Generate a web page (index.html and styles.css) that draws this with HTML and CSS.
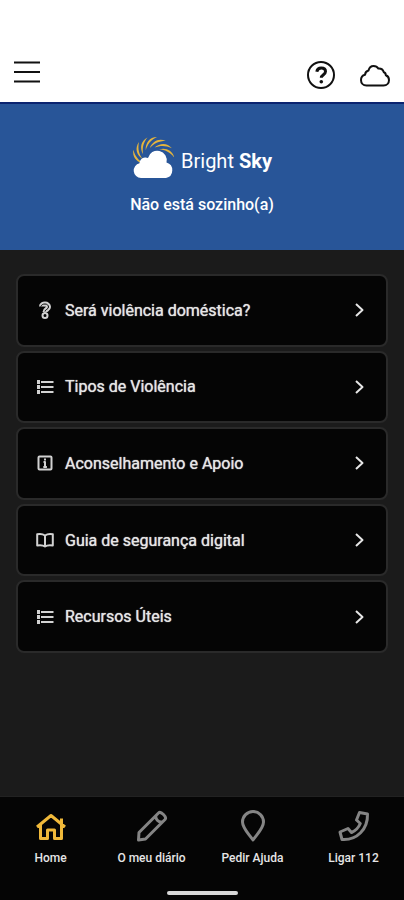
FILE: index.html
```html
<!DOCTYPE html>
<html lang="pt">
<head>
  <meta charset="UTF-8">
  <meta name="viewport" content="width=device-width, initial-scale=1.0">
  <title>Bright Sky</title>
  <link rel="stylesheet" href="styles.css">
</head>
<body>

  <header class="topbar">
    <button type="button" class="icon-btn menu-btn" aria-label="Menu">
      <svg width="26" height="24" viewBox="0 0 26 24"><path d="M0 2.500h26M0 12h26M0 21.500h26"/></svg>
    </button>
    <div class="topbar-actions">
      <button type="button" class="icon-btn" aria-label="Ajuda">
        <svg width="30" height="30" viewBox="0 0 30 30">
          <circle cx="15" cy="15" r="13"/>
          <path class="mark" d="M10.800 11.800c.4-2.600 2.200-3.800 4.400-3.800 2.500 0 4.300 1.400 4.300 3.600 0 3.200-4.200 3-4.200 6.200"/>
          <circle class="dot" cx="15.300" cy="21.800" r="1.800"/>
        </svg>
      </button>
      <button type="button" class="icon-btn" aria-label="Nuvem">
        <svg class="cloud" width="30" height="30" viewBox="0 0 30 30"><path d="M6.500 25.500C3 25.500 1 23 1 20c0-2.700 1.600-4.600 4-5.200C5.200 12.500 6.600 11 8.500 10.500 9.300 7.500 11 6 13.500 6c2 0 3.800.8 4.800 2.600 2.500-.2 4.700 1 5.500 3.600 1.500.4 2 1.600 2 3 2 .7 3.200 2.600 3.200 4.800 0 3-2 5.500-5.500 5.500z"/></svg>
      </button>
    </div>
  </header>

  <section class="hero">
    <div class="brand">
      <svg width="42" height="42" viewBox="0 0 42 42">
        <g class="rays">
          <path d="M10.500 22C4.500 18 2.500 11 7 5C5.500 12 7 17 10.500 22z" transform="rotate(-26 21 21)"/>
          <path d="M10.500 22C4.500 18 2.500 11 7 5C5.500 12 7 17 10.500 22z"/>
          <path d="M10.500 22C4.500 18 2.500 11 7 5C5.500 12 7 17 10.500 22z" transform="rotate(26 21 21)"/>
          <path d="M10.500 22C4.500 18 2.500 11 7 5C5.500 12 7 17 10.500 22z" transform="rotate(52 21 21)"/>
          <path d="M10.500 22C4.500 18 2.500 11 7 5C5.500 12 7 17 10.500 22z" transform="rotate(78 21 21)"/>
          <path d="M10.500 22C4.500 18 2.500 11 7 5C5.500 12 7 17 10.500 22z" transform="rotate(104 21 21)"/>
          <path d="M10.500 22C4.500 18 2.500 11 7 5C5.500 12 7 17 10.500 22z" transform="rotate(130 21 21)"/>
        </g>
        <path class="puff" d="M9 41a7.500 7.500 0 0 1-1.500-14.800A6 6 0 0 1 16 21a9.500 9.500 0 0 1 18.500 4.500A8 8 0 0 1 34 41z"/>
      </svg>
      <h1>Bright <strong>Sky</strong></h1>
    </div>
    <p>Não está sozinho(a)</p>
  </section>

  <main>
    <ul class="menu">
      <li>
        <a href="#violencia">
          <svg class="lead question" width="18" height="18" viewBox="0 0 18 18">
            <path class="outer" d="M5.500 5.500C5.500 3.700 7 3 9 3s3.500 1.200 3.500 3c0 2.500-3.500 2.300-3.500 5"/>
            <circle class="outer" cx="9" cy="14.500" r="1"/>
            <path class="inner" d="M4.800 5.500C5.500 3.700 7 3 9 3s3.500 1.200 3.500 3c0 2.500-3.500 2.300-3.500 4.500"/>
            <circle class="inner" cx="9" cy="14.300" r=".3"/>
          </svg>
          <span>Será violência doméstica?</span>
          <svg class="chevron" width="10" height="16" viewBox="0 0 10 16"><path d="M1 2l6.500 6L1 14"/></svg>
        </a>
      </li>
      <li>
        <a href="#tipos">
          <svg class="lead" width="18" height="18" viewBox="0 0 18 18"><path class="bullets" d="M1 4h3M1 9h3M1 14h3"/><path d="M5 4h12.500M5 9h12.500M5 14h12.500"/></svg>
          <span>Tipos de Violência</span>
          <svg class="chevron" width="10" height="16" viewBox="0 0 10 16"><path d="M1 2l6.500 6L1 14"/></svg>
        </a>
      </li>
      <li>
        <a href="#apoio">
          <svg class="lead" width="18" height="18" viewBox="0 0 18 18"><rect x="2.500" y="2.500" width="13" height="13" rx="1"/><path d="M9 4.500v2M7.500 8H9v5M7.300 13h3.600"/></svg>
          <span>Aconselhamento e Apoio</span>
          <svg class="chevron" width="10" height="16" viewBox="0 0 10 16"><path d="M1 2l6.500 6L1 14"/></svg>
        </a>
      </li>
      <li>
        <a href="#guia">
          <svg class="lead" width="18" height="18" viewBox="0 0 18 18"><path d="M9 4.500C7 3 4 2.600 1.200 3.200v11.200C4 14 7 14 9 15.500c2-1.500 5-1.500 7.800-1.100V3.200C14 2.600 11 3 9 4.500zV15"/></svg>
          <span>Guia de segurança digital</span>
          <svg class="chevron" width="10" height="16" viewBox="0 0 10 16"><path d="M1 2l6.500 6L1 14"/></svg>
        </a>
      </li>
      <li>
        <a href="#recursos">
          <svg class="lead" width="18" height="18" viewBox="0 0 18 18"><path class="bullets" d="M1 4h3M1 9h3M1 14h3"/><path d="M5 4h12.500M5 9h12.500M5 14h12.500"/></svg>
          <span>Recursos Úteis</span>
          <svg class="chevron" width="10" height="16" viewBox="0 0 10 16"><path d="M1 2l6.500 6L1 14"/></svg>
        </a>
      </li>
    </ul>
  </main>

  <footer>
    <nav class="tabs">
      <a href="#home" class="active">
        <svg width="32" height="32" viewBox="0 0 32 32"><path d="M2 17L16 5.500 30 17M5.500 15v13.500h7V20h7v8.500h7V15M26.500 14V8.500"/></svg>
        Home
      </a>
      <a href="#diario">
        <svg width="32" height="32" viewBox="0 0 32 32"><path d="M2.500 30l.5-7.500L22.500 3c2.300-2.300 8.800 4 6.500 6.500L9.500 29zM20 5.500c-1 3.500 2.500 7 6 6.500"/></svg>
        O meu diário
      </a>
      <a href="#ajuda">
        <svg width="32" height="32" viewBox="0 0 32 32"><path d="M16 30C11 23 5.500 18 5.500 12a10.500 10.500 0 0 1 21 0c0 6-5.500 11-10.500 18z"/></svg>
        Pedir Ajuda
      </a>
      <a href="tel:112">
        <svg width="32" height="32" viewBox="0 0 32 32"><path d="M21.500 2.500l8 1.500C30 19 19 30.500 4 29.500L2 22l8-3.500 3.500 4c4-1.700 7-4.800 8.800-9L18.500 10z"/></svg>
        Ligar 112
      </a>
    </nav>
    <div class="home-indicator"></div>
  </footer>

</body>
</html>
```
FILE: styles.css
```css
* {
  box-sizing: border-box;
}
body {
  margin: 0;
  font-family: Roboto, Arial, sans-serif;
  background: #1b1b1b;
  color: #e6e6e6;
  display: flex;
  flex-direction: column;
  min-height: 100vh;
}

svg {
  display: block;
  flex-shrink: 0;
  fill: none;
  stroke: currentColor;
  stroke-width: 2;
  stroke-linejoin: round;
}

a {
  color: inherit;
  text-decoration: none;
}

/* top bar */
.topbar {
  background: #fff;
  color: #111;
  border-bottom: 2px solid #0b2470;
  padding: 60px 14px 12px;
  display: flex;
  justify-content: space-between;
  align-items: flex-start;
}
.topbar-actions {
  display: flex;
  gap: 24px;
}
.icon-btn {
  background: none;
  border: none;
  padding: 0;
  color: inherit;
  cursor: pointer;
}
.icon-btn .mark {
  stroke-width: 3;
}
.icon-btn .dot {
  fill: currentColor;
  stroke: none;
}

/* hero */
.hero {
  background: #285598;
  color: #fff;
  height: 146px;
  padding-top: 33px;
  text-align: center;
}
.brand {
  display: flex;
  justify-content: center;
  align-items: center;
  gap: 7px;
}
.brand h1 {
  margin: 6px 0 0;
  font-size: 20px;
  font-weight: 400;
  line-height: 24px;
}
.brand strong {
  font-weight: 700;
}
.rays {
  fill: #e6b53c;
  stroke: none;
}
.puff {
  fill: #fff;
  stroke: none;
}
.hero p {
  margin: 16px 0 0;
  font-size: 16px;
  font-weight: 500;
  line-height: 20px;
}

/* menu */
main {
  flex-grow: 1;
  padding: 24px 16px;
}
.menu {
  list-style: none;
  margin: 0;
  padding: 0;
  display: grid;
  grid-auto-rows: 1fr;
  gap: 4px;
  min-height: 379px;
}
.menu a {
  height: 100%;
  padding: 0 21px 0 18px;
  background: #050505;
  border: 2px solid #2a2a2a;
  border-radius: 8px;
  display: flex;
  align-items: center;
  font-size: 16px;
  text-shadow: 0 0 1px #e6e6e6;
}
.menu span {
  flex-grow: 1;
  margin-left: 11px;
}
.lead {
  color: #d2d2d2;
}
.bullets {
  stroke-width: 4;
}
.question .outer {
  stroke-width: 5;
}
.question .inner {
  stroke: #050505;
  stroke-width: 1;
}

/* bottom tabs */
footer {
  background: #050505;
  border-top: 1px solid #222;
  padding: 13px 0 5px;
}
.tabs {
  display: grid;
  grid-template-columns: repeat(4, 1fr);
}
.tabs a {
  display: flex;
  flex-direction: column;
  align-items: center;
  gap: 8px;
  font-size: 12px;
  font-weight: 500;
  line-height: 16px;
}
.tabs svg {
  color: #858585;
  stroke-width: 3;
}
.tabs .active svg {
  color: #f0b93a;
}
.home-indicator {
  width: 71px;
  height: 4px;
  margin: 25px auto 0;
  border-radius: 2px;
  background: #d8d8d8;
}
```
